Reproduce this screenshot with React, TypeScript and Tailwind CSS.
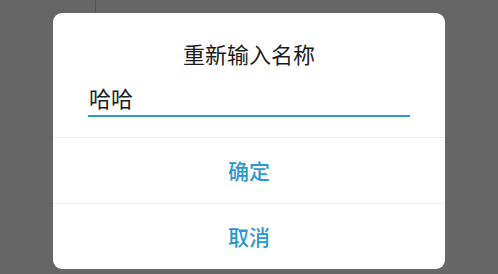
import React from "react";

export default function App() {
  const font = { fontFamily: '"Noto Sans CJK SC", "Noto Sans", sans-serif' };
  return (
    <div className="w-[498px] h-[274px] bg-[#666666] overflow-hidden" style={font}>
      <div className="h-[13px] flex">
        <div className="ml-[95px] w-px h-full bg-[#555555]" />
      </div>
      <div className="ml-[53px] w-[392px] h-[256px] bg-white rounded-[9px] flex flex-col overflow-hidden">
        <div className="pt-[25px] text-center text-[22px] leading-[30px] text-[#1c1c1c]">
          重新输入名称
        </div>
        <div className="mt-[14px] mx-[35px]">
          <div className="pl-px text-[22px] leading-[30px] text-[#1c1c1c]">哈哈</div>
          <div className="mt-[3px] h-[2px] bg-[#3597d6]" />
        </div>
        <div className="mt-[20px] h-px bg-[#f0f0f0]" />
        <div className="h-[65px] flex items-center justify-center text-[21px] font-medium text-[#2b98d2]">
          确定
        </div>
        <div className="h-px bg-[#f0f0f0]" />
        <div className="flex-1 flex items-center justify-center text-[21px] font-medium text-[#2b98d2]">
          取消
        </div>
      </div>
    </div>
  );
}
